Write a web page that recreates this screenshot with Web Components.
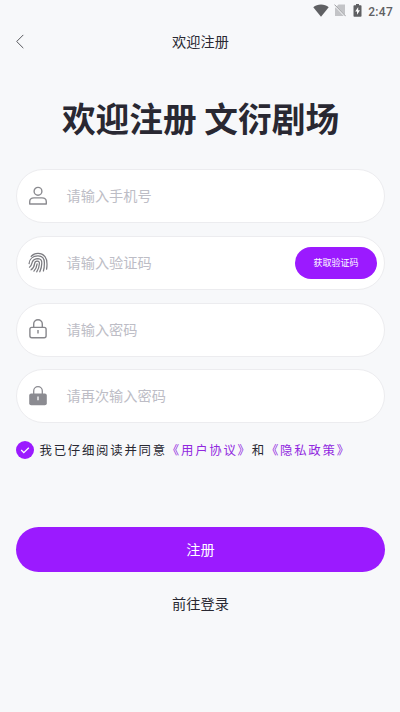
<!DOCTYPE html>
<html lang="zh-CN">
<head>
<meta charset="utf-8">
<title>欢迎注册</title>
<style>
html,body{margin:0;height:100%;background:#f7f8fa}
body{font-family:"Noto Sans CJK SC",sans-serif;color:#292832;overflow:hidden}
</style>
</head>
<body>
<register-page></register-page>
<script>
const define = (name, html) => {
  const t = document.createElement('template');
  t.innerHTML = html;
  customElements.define(name, class extends HTMLElement {
    constructor() {
      super();
      this.attachShadow({ mode: 'open' }).append(t.content.cloneNode(true));
    }
  });
};

define('status-bar', `
<style>
:host{display:flex;height:22px;align-items:center;justify-content:flex-end;padding-right:7px;box-sizing:border-box;color:#5f6063;font:500 12px/22px Roboto,sans-serif}
svg{display:block;flex:none;margin-top:-1px}
.wifi{margin-right:5px}.sim{margin-right:7px}.bat{margin-right:6px}
span{letter-spacing:.3px;padding-top:1px}
</style>
<svg class="wifi" width="16" height="13" viewBox="0 0 16 13"><path fill="#5f6063" d="M8 12.700.3 3.200C2.400 1.400 5 .4 8 .4s5.600 1 7.700 2.800z"/></svg>
<svg class="sim" width="12" height="13" viewBox="0 0 12 13"><path fill="#c3c4c7" d="M4.500.5H11V12H1V4z"/><path d="M.2.900 11.500 12.600" stroke="#f7f8fa" stroke-width="1.600"/><path d="M.5.600 11.700 12.200" stroke="#98999c" stroke-width="1"/></svg>
<svg class="bat" width="9" height="13" viewBox="0 0 9 13"><path fill="#5f6063" d="M3 0h3v1.300h1.700q.8 0 .8.800v9.900q0 .8-.8.800H1.300q-.8 0-.8-.8V2.100q0-.8.8-.8H3z"/><path fill="#fff" d="M5.200 3 2.200 7.500H4v3.200l3-4.500H5.200z"/></svg>
<span>2:47</span>`);

define('nav-bar', `
<style>
:host{display:grid;grid-template-columns:44px 1fr 44px;height:37px;padding-bottom:2px;align-items:center;font-size:14.200px;line-height:20px;text-align:center}
svg{display:block;margin:1px 0 0 15px}
span{padding-left:1px}
</style>
<svg width="10" height="15" viewBox="0 0 10 15"><path d="M8.300.900 1.700 7.500l6.600 6.600" fill="none" stroke="#57585d" stroke-width="1"/></svg>
<span><slot></slot></span>`);

define('form-field', `
<style>
:host{display:flex;align-items:center;height:54px;box-sizing:border-box;border:1px solid #ececef;border-radius:27px;background:#fff;padding:0 7px 0 9px}
.icon{display:flex;width:24px;height:24px;flex:none}
.text{flex:1;margin-left:16.500px;padding-bottom:2px;font-size:14.200px;line-height:20px;color:#bdbdc6;white-space:nowrap}
</style>
<span class="icon"><slot name="icon"></slot></span><span class="text"><slot></slot></span><slot name="action"></slot>`);

const icons = {
  user: `<g transform="translate(0 -.2)" fill="none" stroke="#8b8b90" stroke-width="1.400"><circle cx="12" cy="7.500" r="3.900"/><path d="M3.700 20.200v-2.200c0-2.500 1.900-3.900 4.300-3.900h8c2.400 0 4.300 1.400 4.300 3.900v2.200z" stroke-linejoin="round"/></g>`,
  finger: `<g fill="none" stroke="#7b7b80" stroke-width="1.250" stroke-linecap="round"><path d="M5.200 5.400C8.700 1.400 15.500 1.400 19 5.600c2.400 3 2.400 7.200 1.600 12.600"/><path d="M3.100 12.600C3.400 8.200 6.700 4.900 12 4.900c4.400 0 6.400 3.300 6.400 7.100 0 3-.2 5.600-1 8"/><path d="M3.500 16.200c2.300-1.300 2.100-3.500 2.800-5.300.9-2.200 3-3.300 5.700-3.300 2.700.1 3.900 2.100 3.800 4.500-.1 3.300-.7 6-2 8.700"/><path d="M5.100 18.800c2.600-1.800 3.200-3.700 3.500-6.200.2-1.600 1.400-2.500 2.800-2.400 1.500.1 2.100 1.100 2 2.500-.2 3.300-1.200 5.800-2.700 8.100"/><path d="M7.900 20.100c1.900-2 2.900-4.300 3.200-7.200"/></g>`,
  lock: `<g transform="translate(0 -.8)" fill="none" stroke="#87878c" stroke-width="1.400"><rect x="3.900" y="10.200" width="16.200" height="10.300" rx="1.900"/><path d="M7.700 10V6.900a4.300 4.300 0 0 1 8.600 0V10M12 12.700v3.600"/></g>`,
  solid: `<rect x="3.200" y="9.400" width="17.600" height="11.900" rx="2" fill="#8b8b91"/><path d="M7.700 10V7a4.300 4.300 0 0 1 8.600 0v3" fill="none" stroke="#8b8b91" stroke-width="1.300"/><path d="M12 12.600v3.600" stroke="#fff" stroke-width="1.300"/>`
};
const icon = n => `<svg slot="icon" width="24" height="24" viewBox="0 0 24 24">${icons[n]}</svg>`;

define('pill-button', `
<style>
:host{display:flex;align-items:center;justify-content:center;box-sizing:border-box;background:#9b1aff;color:#fff;border-radius:99px;white-space:nowrap}
</style><slot></slot>`);

define('agree-line', `
<style>
:host{display:flex;align-items:center;height:20px;font-size:12.400px;line-height:20px;letter-spacing:1.760px;white-space:nowrap}
svg{display:block;margin-right:5.500px;flex:none}
b{font-weight:400;color:#9128df}
</style>
<svg width="18" height="18" viewBox="0 0 18 18"><circle cx="9" cy="9" r="9" fill="#9b1aff"/><path d="m5.200 9 2.600 2.600 5-4.900" fill="none" stroke="#fff" stroke-width="1.300"/></svg><span>我已仔细阅读并同意<b>《用户协议》</b>和<b>《隐私政策》</b></span>`);

define('register-page', `
<style>
:host{display:flex;flex-direction:column;width:400px;height:712px;background:#f7f8fa}
h1{margin:32px 0 0;padding-left:1px;text-align:center;font-size:33.700px;line-height:50px;font-weight:700;white-space:nowrap;color:#292832}
form{display:grid;gap:12.800px;margin:26px 15px 0 16px}
.code{width:82px;height:32px;font-size:9px}
agree-line{margin:17px 16px 0}
.submit{margin:67px 15px 0 16px;height:45px;padding-bottom:2px;flex:none;font-size:14.200px;line-height:20px}
.login{margin-top:21px;padding-left:1px;text-align:center;font-size:14.200px;line-height:20px}
</style>
<status-bar></status-bar>
<nav-bar>欢迎注册</nav-bar>
<h1>欢迎注册 文衍剧场</h1>
<form>
<form-field>${icon('user')}请输入手机号</form-field>
<form-field>${icon('finger')}请输入验证码<pill-button class="code" slot="action">获取验证码</pill-button></form-field>
<form-field>${icon('lock')}请输入密码</form-field>
<form-field>${icon('solid')}请再次输入密码</form-field>
</form>
<agree-line></agree-line>
<pill-button class="submit">注册</pill-button>
<div class="login">前往登录</div>`);
</script>
</body>
</html>
